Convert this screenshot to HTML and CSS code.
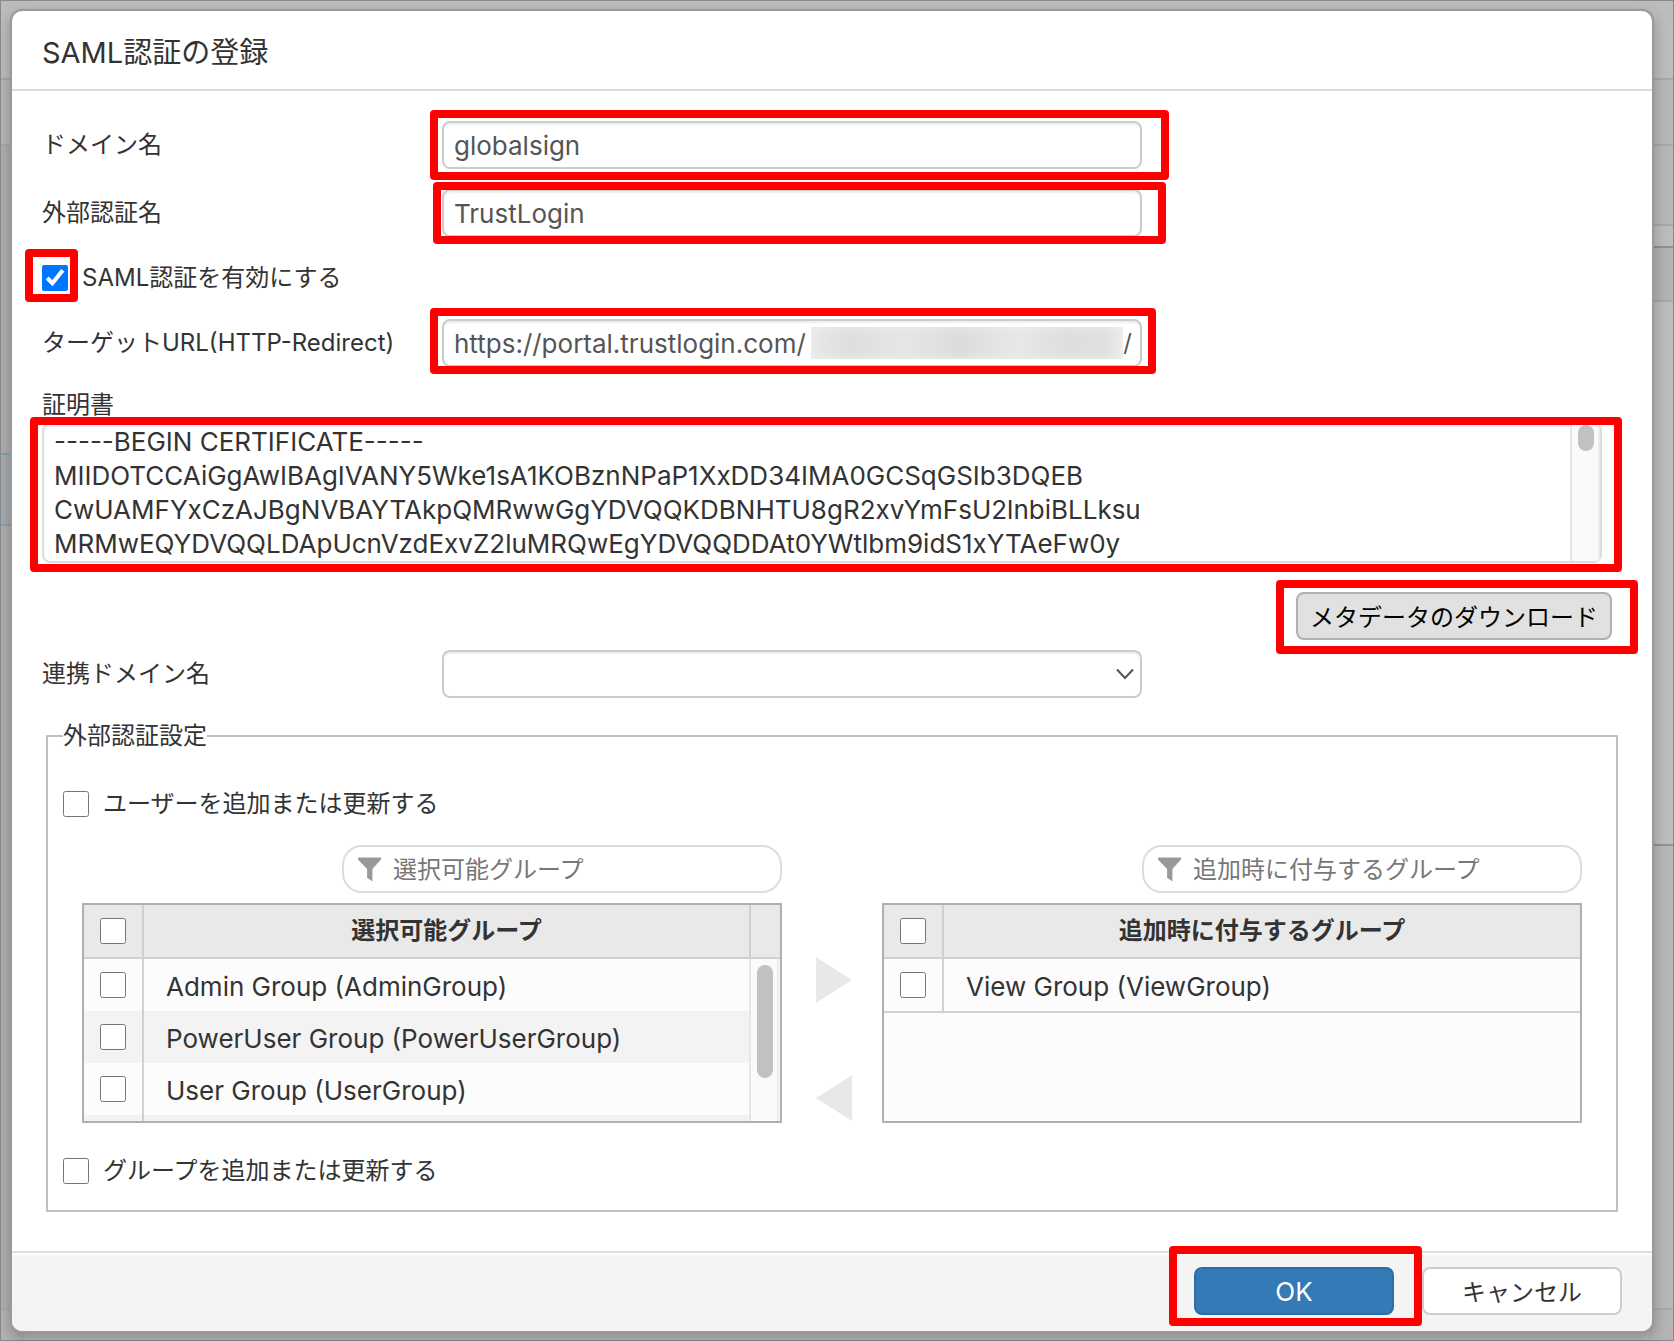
FILE: index.html
```html
<!DOCTYPE html>
<html lang="ja">

<head>
    <meta charset="UTF-8">
    <meta name="viewport" content="width=device-width, initial-scale=1.0">
    <title>SAML認証の登録</title>
    <link rel="stylesheet" href="styles.css">
</head>

<body>
    <!-- dimmed page behind the dialog -->
    <div class="backdrop">
        <div class="strip strip-left">
            <div class="band band-a"></div>
            <div class="band band-b"></div>
            <div class="band band-c"></div>
            <div class="band band-selected"></div>
            <div class="band band-rest"></div>
            <div class="band band-end"></div>
        </div>
        <div class="strip strip-right">
            <div class="band band-a"></div>
            <div class="band band-b"></div>
            <div class="band band-tools"></div>
            <div class="band band-gap"></div>
            <div class="band band-head"></div>
            <div class="band band-list"></div>
            <div class="band band-rest"></div>
            <div class="band band-end"></div>
        </div>
    </div>

    <form class="dialog">
        <header class="dialog-header">
            <h1>SAML認証の登録</h1>
        </header>

        <div class="dialog-body">
            <div class="row">
                <label for="domain">ドメイン名</label>
                <div class="field">
                    <input class="text" type="text" id="domain" value="globalsign">
                    <div class="mark mark-domain"></div>
                </div>
            </div>

            <div class="row">
                <label for="authName">外部認証名</label>
                <div class="field">
                    <input class="text" type="text" id="authName" value="TrustLogin">
                    <div class="mark mark-auth"></div>
                </div>
            </div>

            <div class="check check-saml">
                <input type="checkbox" id="samlOn" checked>
                <label for="samlOn">SAML認証を有効にする</label>
                <div class="mark mark-check"></div>
            </div>

            <div class="row">
                <label for="targetUrl">ターゲットURL(HTTP-Redirect)</label>
                <div class="field">
                    <input class="text" type="text" id="targetUrl" value="https://portal.trustlogin.com/">
                    <div class="url-tail"><span class="masked"></span>/</div>
                    <div class="mark mark-url"></div>
                </div>
            </div>

            <label class="cert-label" for="cert">証明書</label>
            <div class="cert">
                <textarea id="cert" rows="4">-----BEGIN CERTIFICATE-----
MIIDOTCCAiGgAwIBAgIVANY5Wke1sA1KOBznNPaP1XxDD34IMA0GCSqGSIb3DQEB
CwUAMFYxCzAJBgNVBAYTAkpQMRwwGgYDVQQKDBNHTU8gR2xvYmFsU2lnbiBLLksu
MRMwEQYDVQQLDApUcnVzdExvZ2luMRQwEgYDVQQDDAt0YWtlbm9idS1xYTAeFw0y</textarea>
                <div class="scroll"><div class="thumb"></div></div>
                <div class="mark mark-cert"></div>
            </div>

            <div class="download">
                <button type="button" class="btn btn-gray">メタデータのダウンロード</button>
                <div class="mark mark-download"></div>
            </div>

            <div class="row">
                <label for="linkDomain">連携ドメイン名</label>
                <div class="field">
                    <select class="text" id="linkDomain">
                        <option value=""></option>
                    </select>
                    <svg class="chevron" viewBox="0 0 18 12" width="18" height="12"><path d="M1 1.5 L9 10 L17 1.5" fill="none" stroke="#555" stroke-width="2"/></svg>
                </div>
            </div>

            <fieldset>
                <legend>外部認証設定</legend>

                <div class="check">
                    <input type="checkbox" id="updateUser">
                    <label for="updateUser">ユーザーを追加または更新する</label>
                </div>

                <div class="transfer">
                    <div class="side">
                        <div class="filter">
                            <svg viewBox="0 0 24 25" width="24" height="25"><path d="M0 0 H24 V2 L15 12 V25 L9.500 21 V12 L0 2 Z" fill="#999"/></svg>
                            <input type="text" placeholder="選択可能グループ" aria-label="選択可能グループ">
                        </div>
                        <div class="list">
                            <table>
                                <thead>
                                    <tr>
                                        <th class="tick"><input type="checkbox" aria-label="すべて選択"></th>
                                        <th>選択可能グループ</th>
                                        <th class="bar"></th>
                                    </tr>
                                </thead>
                                <tbody>
                                    <tr>
                                        <td class="tick"><input type="checkbox" id="g1"></td>
                                        <td class="name"><label for="g1">Admin Group (AdminGroup)</label></td>
                                        <td class="bar" rowspan="4"><div class="bar-track"><div class="thumb"></div></div></td>
                                    </tr>
                                    <tr>
                                        <td class="tick"><input type="checkbox" id="g2"></td>
                                        <td class="name"><label for="g2">PowerUser Group (PowerUserGroup)</label></td>
                                    </tr>
                                    <tr>
                                        <td class="tick"><input type="checkbox" id="g3"></td>
                                        <td class="name"><label for="g3">User Group (UserGroup)</label></td>
                                    </tr>
                                    <tr>
                                        <td class="tick"></td>
                                        <td class="name"></td>
                                    </tr>
                                </tbody>
                            </table>
                        </div>
                    </div>

                    <div class="arrows">
                        <button type="button" aria-label="追加"><svg viewBox="0 0 36 46" width="36" height="46"><path d="M0 0 L36 23 L0 46 Z" fill="#e8e8e8"/></svg></button>
                        <button type="button" aria-label="削除"><svg viewBox="0 0 36 46" width="36" height="46"><path d="M36 0 L0 23 L36 46 Z" fill="#e8e8e8"/></svg></button>
                    </div>

                    <div class="side">
                        <div class="filter">
                            <svg viewBox="0 0 24 25" width="24" height="25"><path d="M0 0 H24 V2 L15 12 V25 L9.500 21 V12 L0 2 Z" fill="#999"/></svg>
                            <input type="text" placeholder="追加時に付与するグループ" aria-label="追加時に付与するグループ">
                        </div>
                        <div class="list">
                            <table class="short">
                                <thead>
                                    <tr>
                                        <th class="tick"><input type="checkbox" aria-label="すべて選択"></th>
                                        <th>追加時に付与するグループ</th>
                                    </tr>
                                </thead>
                                <tbody>
                                    <tr>
                                        <td class="tick"><input type="checkbox" id="g4"></td>
                                        <td class="name"><label for="g4">View Group (ViewGroup)</label></td>
                                    </tr>
                                </tbody>
                            </table>
                        </div>
                    </div>
                </div>

                <div class="check">
                    <input type="checkbox" id="updateGroup">
                    <label for="updateGroup">グループを追加または更新する</label>
                </div>
            </fieldset>
        </div>

        <footer class="dialog-footer">
            <div class="ok">
                <button type="button" class="btn btn-primary">OK</button>
                <div class="mark mark-ok"></div>
            </div>
            <button type="button" class="btn">キャンセル</button>
        </footer>
    </form>
</body>

</html>
```
FILE: styles.css
```css
* {
    box-sizing: border-box;
}

body {
    margin: 0;
    padding: 9px 20px 8px 10px;
    min-height: 100vh;
    position: relative;
    background-color: #bcbcbc;
    color: #333;
    font-family: Inter, "Noto Sans CJK JP", sans-serif;
    font-size: 24px;
    line-height: 36px;
}

input,
select,
textarea,
button {
    font-family: inherit;
    font-size: inherit;
    color: inherit;
    margin: 0;
}

input[type="checkbox"] {
    width: 26px;
    height: 26px;
    flex-shrink: 0;
}

/* dimmed page */
.backdrop {
    position: absolute;
    inset: 0;
    display: flex;
    justify-content: space-between;
    border: 1px solid #8a8a8a;
}

.strip {
    display: flex;
    flex-direction: column;
    width: 24px;
}

.strip-left {
    background-color: #b0aeae;
}

.band {
    border-bottom: 2px solid #a8a8a8;
}

.band-a {
    height: 79px;
    background-color: #bcbcbc;
}

.band-b {
    height: 66px;
    background-color: #b7b7b7;
}

.band-c {
    height: 307px;
    border: none;
}

.band-selected {
    height: 73px;
    background-color: #a6abb0;
    border-top: 2px solid #7ea3bd;
    border-bottom-color: #7ea3bd;
}

.band-tools {
    height: 80px;
    background-color: #b7b7b7;
}

.band-gap {
    height: 22px;
    border-color: #929292;
}

.band-head {
    height: 54px;
    background-color: #b2b2b2;
}

.band-list {
    height: 544px;
    border-color: #929292;
}

.band-rest {
    flex: 1;
}

.strip-right .band-rest {
    background-color: #b7b7b7;
}

.band-end {
    height: 30px;
    border: none;
    background-color: #b4b4b4;
}

/* dialog */
.dialog {
    position: relative;
    background-color: #fff;
    border: 2px solid #999;
    border-radius: 12px;
    box-shadow: 0 6px 14px rgba(0, 0, 0, 0.25);
}

.dialog-header {
    padding: 24px 30px 18px;
    border-bottom: 2px solid #ddd;
}

.dialog-header h1 {
    margin: 0;
    font-size: 29px;
    font-weight: 400;
    line-height: 36px;
}

.dialog-body {
    padding: 30px 30px 39px;
}

.row {
    display: flex;
    align-items: center;
    margin-bottom: 20px;
}

.row > label {
    width: 400px;
}

.field {
    position: relative;
    width: 700px;
}

.text {
    display: block;
    width: 100%;
    height: 48px;
    padding: 0 10px;
    border: 2px solid #ccc;
    border-radius: 8px;
    background-color: #fff;
    color: #555;
    font-size: 26px;
    box-shadow: inset 0 2px 2px rgba(0, 0, 0, 0.07);
    appearance: none;
}

.chevron {
    position: absolute;
    right: 8px;
    top: 18px;
}

.url-tail {
    position: absolute;
    top: 8px;
    right: 10px;
    display: flex;
    align-items: center;
    height: 32px;
    color: #555;
}

.masked {
    width: 312px;
    height: 32px;
    background: linear-gradient(90deg, #e9e9e9, #dedede 12%, #e6e6e6 30%, #dcdcdc 48%, #e8e8e8 66%, #dedede 82%, #e0e0e0 94%, #ebebeb);
    box-shadow: inset 0 0 8px #f0f0f0;
}

.check {
    position: relative;
    display: flex;
    align-items: center;
    gap: 14px;
    height: 26px;
}

.check-saml {
    margin: 28px 0;
}

.cert-label {
    display: block;
}

.cert {
    position: relative;
    display: flex;
    margin-right: 20px;
    border: 2px solid #ddd;
    border-radius: 8px;
    box-shadow: inset 0 2px 2px rgba(0, 0, 0, 0.07);
}

.cert textarea {
    flex: 1;
    height: 136px;
    padding: 0 10px;
    border: none;
    background: none;
    font-size: 26px;
    line-height: 34px;
    resize: none;
    overflow: hidden;
    white-space: pre;
}

.scroll {
    width: 30px;
    padding: 0 6px;
    border-left: 2px solid #e6e6e6;
    border-right: 2px solid #ececec;
    background-color: #fafafa;
}

.thumb {
    width: 16px;
    height: 26px;
    border-radius: 8px;
    background-color: #c1c1c1;
}

.download {
    position: relative;
    width: fit-content;
    margin: 29px 10px 10px auto;
}

/* buttons */
.btn {
    display: block;
    width: 200px;
    height: 48px;
    padding: 0 12px 2px;
    border: 2px solid #ccc;
    border-radius: 8px;
    background-color: #fff;
}

.btn-gray {
    width: auto;
    border-color: #b0b0b0;
    background-color: #e1e1e1;
    color: #000;
}

.btn-primary {
    padding: 0 12px;
    border-color: #2e6da4;
    background-color: #337ab7;
    color: #fff;
    font-size: 26px;
}

/* group settings */
fieldset {
    margin: 0 4px;
    padding: 37px 15px 26px;
    border: 2px solid #c0c0c0;
    min-width: 0;
}

legend {
    padding: 0;
}

.transfer {
    display: grid;
    grid-template-columns: 1fr 100px 1fr;
    margin: 28px 19px 35px;
}

.filter {
    display: flex;
    align-items: center;
    gap: 12px;
    width: 440px;
    height: 48px;
    margin: 0 0 10px auto;
    padding: 0 14px;
    border: 2px solid #ddd;
    border-radius: 20px;
}

.filter input {
    flex: 1;
    padding: 0;
    border: none;
    background: none;
}

.filter input::placeholder {
    color: #777;
}

.list {
    height: 220px;
    overflow: hidden;
    border: 2px solid #b0b0b0;
    background-color: #fcfcfc;
}

table {
    width: 100%;
    table-layout: fixed;
    border-spacing: 0;
}

th,
td {
    height: 52px;
    padding: 0;
    text-align: left;
}

th {
    height: 54px;
    border-bottom: 2px solid #d0d0d0;
    background-color: #e9e9e9;
    text-align: center;
}

.name {
    padding: 4px 22px 0;
    font-size: 26px;
}

tbody tr:nth-child(even) td {
    background-color: #f3f3f3;
}

.short td {
    height: 54px;
    border-bottom: 2px solid #d0d0d0;
}

.tick {
    width: 60px;
    padding: 0 0 0 16px;
    border-right: 2px solid #d0d0d0;
    text-align: left;
}

.tick input {
    display: block;
}

.bar {
    width: 31px;
    padding: 0;
    border-left: 2px solid #d0d0d0;
    vertical-align: top;
}

td.bar {
    border-color: #e6e6e6;
    background-color: #fafafa;
}

.bar-track {
    height: 208px;
    margin-right: 1px;
    padding: 6px;
    border-right: 2px solid #ececec;
}

.bar .thumb {
    height: 113px;
}

.arrows {
    display: flex;
    flex-direction: column;
    align-items: center;
    gap: 72px;
    padding: 112px 0 0 4px;
}

.arrows button {
    padding: 0;
    border: none;
    background: none;
}

.arrows svg {
    display: block;
}

.dialog-footer {
    display: flex;
    justify-content: flex-end;
    gap: 28px;
    padding: 14px 30px 16px;
    border-top: 2px solid #ddd;
    border-radius: 0 0 10px 10px;
    background-color: #f4f4f4;
    box-shadow: inset 0 2px #fff;
}

.ok {
    position: relative;
}

/* red frames over the parts to fill in */
.mark {
    position: absolute;
    border: 8px solid #f00;
    border-radius: 4px;
    pointer-events: none;
}

.mark-domain {
    inset: -11px -27px -11px -12px;
}

.mark-auth {
    inset: -7px -24px -7px -9px;
}

.mark-check {
    inset: -16px auto -11px -17px;
    width: 53px;
}

.mark-url {
    inset: -11px -14px -7px -12px;
}

.mark-cert {
    inset: -8px -22px -11px -14px;
}

.mark-download {
    inset: -12px -26px -14px -20px;
}

.mark-ok {
    inset: -21px -28px -11px -25px;
}
```
